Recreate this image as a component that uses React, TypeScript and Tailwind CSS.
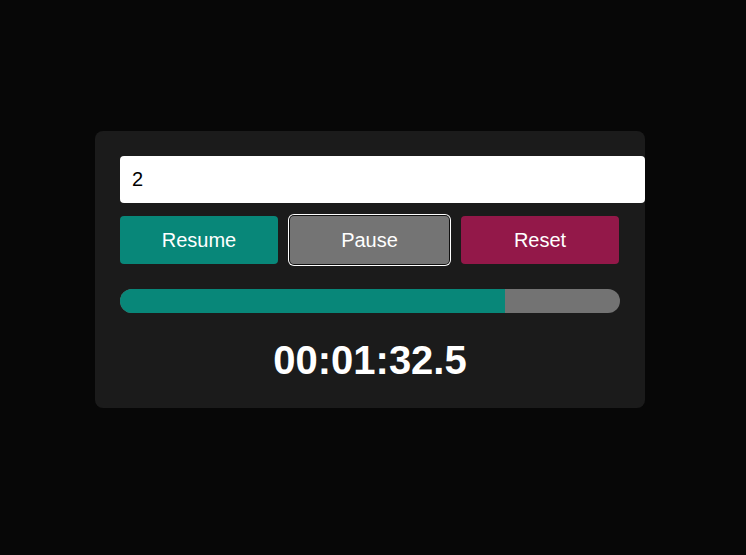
import React from "react";

export default function App() {
  return (
    <div className="min-h-[555px] w-full bg-[#070707] pt-[131px] pl-[95px]" style={{ fontFamily: '"Liberation Sans", Arial, sans-serif' }}>
      <div className="w-[550px] h-[277px] rounded-[8px] bg-[#1b1b1b] p-[25px] flex flex-col">
        <input
          readOnly
          value="2"
          className="w-[525px] h-[47px] rounded-[4px] bg-white px-[12px] text-[20px] text-black outline-none"
        />
        <div className="mt-[13px] flex gap-[12px] w-[500px]">
          <button className="w-[158px] h-[48px] rounded-[4px] bg-[#088779] text-white text-[20px]">Resume</button>
          <button className="w-[159px] h-[48px] rounded-[4px] bg-[#747474] text-white text-[20px] shadow-[0_0_0_1px_#101010,0_0_0_2px_#ffffff]">Pause</button>
          <button className="w-[158px] h-[48px] rounded-[4px] bg-[#931849] text-white text-[20px]">Reset</button>
        </div>
        <div className="mt-[25px] w-[500px] h-[24px] rounded-full bg-[#737373] overflow-hidden flex">
          <div className="h-full bg-[#088779]" style={{ width: "77%" }} />
        </div>
        <div className="mt-[24px] w-[500px] text-center text-white font-bold text-[40px] leading-[46px]">00:01:32.5</div>
      </div>
    </div>
  );
}
